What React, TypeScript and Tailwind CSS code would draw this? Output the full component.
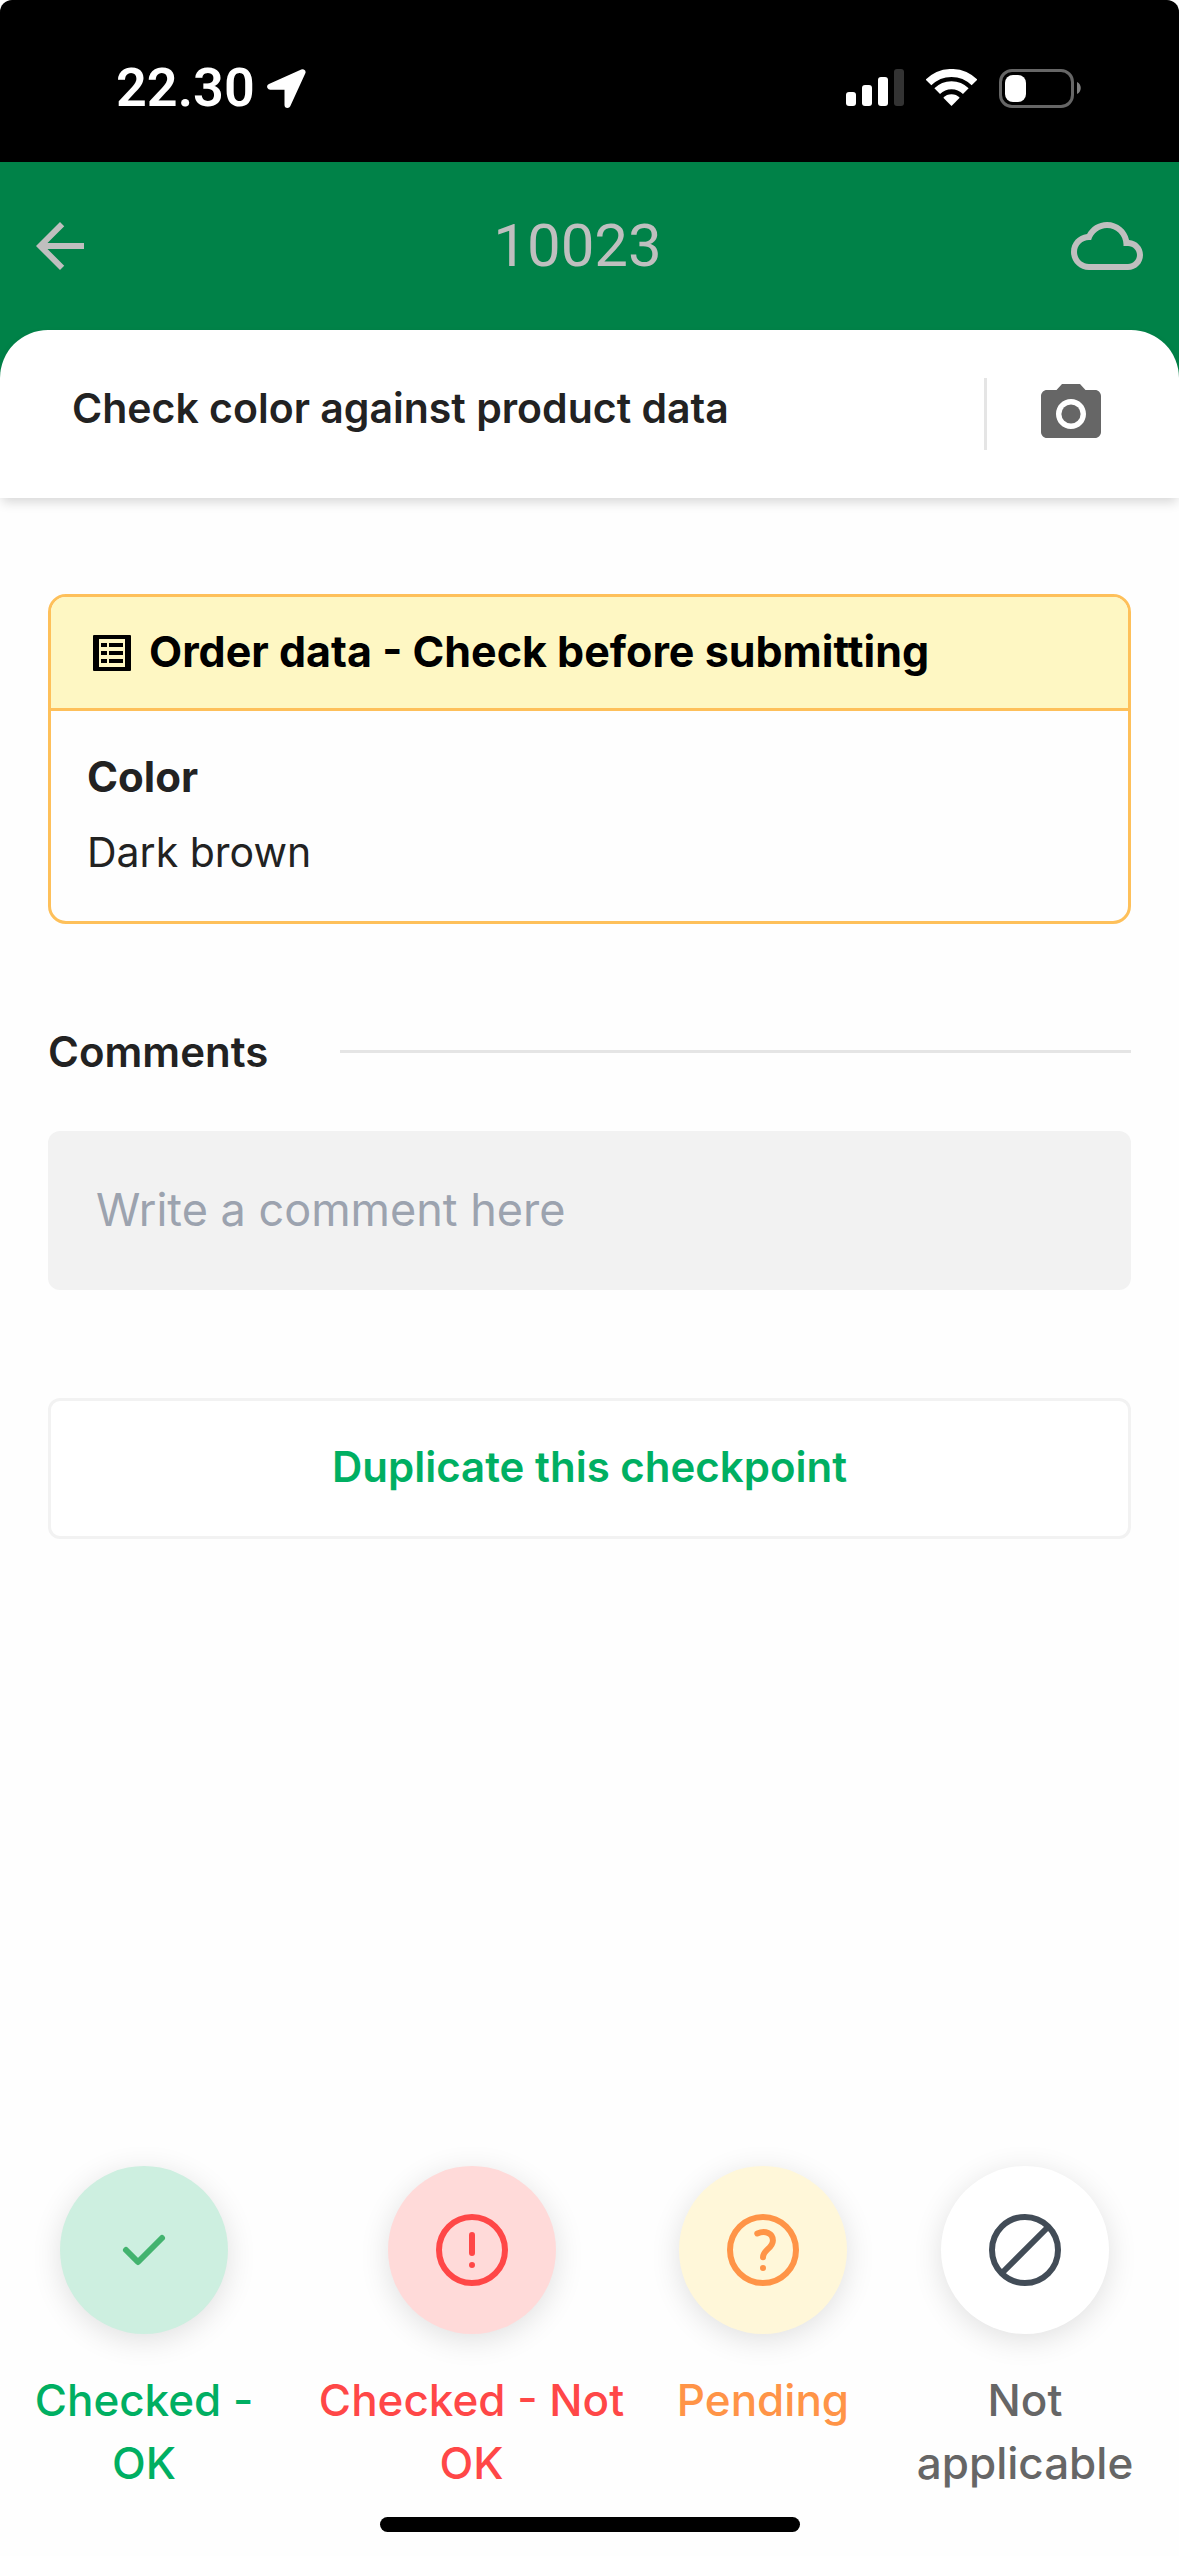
import React from "react";

const SignalIcon = () => (
  <svg width="58" height="38" viewBox="0 0 58 38" fill="#fff" aria-hidden="true">
    <rect x="0" y="23" width="10" height="14" rx="3" />
    <rect x="16" y="16" width="10" height="21" rx="3" />
    <rect x="32" y="8" width="10" height="29" rx="3" />
    <rect x="48" y="0" width="10" height="37" rx="3" fill="#333" />
  </svg>
);

const WifiIcon = () => (
  <svg width="51" height="38" viewBox="0 0 51 38" aria-hidden="true">
    <g fill="none" stroke="#fff" strokeWidth="8">
      <path d="M2.5 13.5a32.5 32.5 0 0 1 46 0" />
      <path d="M11.2 22.2a20.2 20.2 0 0 1 28.6 0" />
    </g>
    <path d="M17.3 28.8a11.4 11.4 0 0 1 16.4 0L25.5 37z" fill="#fff" />
  </svg>
);

const BatteryIcon = () => (
  <svg width="82" height="39" viewBox="0 0 82 39" aria-hidden="true">
    <rect x="1.5" y="1.5" width="72" height="36" rx="11.5" fill="none" stroke="#666" strokeWidth="3" />
    <rect x="6" y="6" width="21" height="27" rx="8" fill="#fff" />
    <path d="M78 13c5 2 5 10 0 12z" fill="#808080" />
  </svg>
);

const LocationIcon = () => (
  <svg width="39" height="39" viewBox="0 0 39 39" aria-hidden="true">
    <path d="M35.5 3.2 3.2 17.8h17.3V36z" fill="#fff" stroke="#fff" strokeWidth="6" strokeLinejoin="round" />
  </svg>
);

const ListIcon = () => (
  <svg width="38" height="40" viewBox="0 0 38 40" aria-hidden="true">
    <path d="M1 4h36a1 1 0 0 1 1 1v34a1 1 0 0 1-1 1H1a1 1 0 0 1-1-1V5a1 1 0 0 1 1-1zm5 4v28h26V8z" fillRule="evenodd" />
    <path d="M8 12h6v4H8zM16 12h14v4H16zM8 20h6v4H8zM16 20h14v4H16zM8 28h6v4H8zM16 28h14v4H16z" />
  </svg>
);

const StatusIcon: React.FC<{ children: React.ReactNode }> = ({ children }) => (
  <svg
    width="72"
    height="72"
    viewBox="0 0 24 24"
    fill="none"
    stroke="currentColor"
    strokeWidth="2"
    strokeLinecap="round"
    strokeLinejoin="round"
    aria-hidden="true"
  >
    {children}
  </svg>
);

const statuses = [
  {
    label: "Checked - OK",
    text: "text-[#00af62]",
    circle: "bg-[#cdefe0] text-[#43b36f]",
    icon: <path d="m6 12 4 4 8-8" />,
  },
  {
    label: "Checked - Not OK",
    text: "text-[#ff4747]",
    circle: "bg-[#ffdad9] text-[#ff4747]",
    icon: (
      <>
        <circle cx="12" cy="12" r="11" />
        <path d="M12 7v6M12 17v0" />
      </>
    ),
  },
  {
    label: "Pending",
    text: "text-[#ff9447]",
    circle: "bg-[#fff7d9] text-[#ff9447]",
    icon: (
      <>
        <circle cx="12" cy="12" r="11" />
        <path d="M10.1 6.5c2.7-1.2 5.2 0 5.2 2.3 0 2.6-3.3 3.2-3.3 5.6M12 18v0" />
      </>
    ),
  },
  {
    label: "Not applicable",
    text: "text-[#666]",
    circle: "bg-white text-[#424c57]",
    icon: (
      <>
        <circle cx="12" cy="12" r="11" />
        <path d="M4.5 19.5l15-15" />
      </>
    ),
  },
];

const App: React.FC = () => {
  return (
    <div className="flex min-h-screen flex-col bg-[#fefefe] font-['Inter',sans-serif] text-[#222]">
      {/* Device status bar */}
      <div className="flex items-center justify-between rounded-t-[12px] bg-black pt-[58px] pr-[98px] pb-11 pl-[116px]">
        <div className="flex items-center gap-3">
          <span className="font-['Roboto',sans-serif] text-[54px] leading-[60px] font-semibold text-white">22.30</span>
          <LocationIcon />
        </div>
        <div className="flex items-center gap-[22px]">
          <SignalIcon />
          <WifiIcon />
          <BatteryIcon />
        </div>
      </div>

      <header className="flex items-center justify-between bg-[#008248] px-9 py-12 text-[#bfbfbf]">
        <button type="button" aria-label="Back">
          <svg width="48" height="48" viewBox="4 4 16 16" fill="currentColor" aria-hidden="true">
            <path d="M20 11H7.83l5.59-5.59L12 4l-8 8 8 8 1.41-1.41L7.83 13H20z" />
          </svg>
        </button>
        <h1 className="font-['Roboto',sans-serif] text-[60px] leading-[72px]">10023</h1>
        <button type="button" aria-label="Sync">
          <svg width="72" height="72" viewBox="0 0 24 24" fill="currentColor" aria-hidden="true">
            <path d="M19.35 10.04C18.67 6.59 15.64 4 12 4 9.11 4 6.6 5.64 5.35 8.04 2.34 8.36 0 10.91 0 14c0 3.31 2.69 6 6 6h13c2.76 0 5-2.24 5-5 0-2.64-2.05-4.78-4.65-4.96zM19 18H6c-2.21 0-4-1.79-4-4s1.79-4 4-4h.71C7.37 7.69 9.48 6 12 6c3.04 0 5.5 2.46 5.5 5.5v.5H19c1.66 0 3 1.34 3 3s-1.34 3-3 3z" />
          </svg>
        </button>
      </header>

      {/* Checkpoint title */}
      <div className="bg-[#008248]">
        <div className="flex items-start justify-between rounded-t-[48px] bg-white px-[72px] py-12 shadow-[0_6px_12px_-2px_rgba(0,0,0,0.16)]">
          <h2 className="text-[41px] leading-[60px] font-semibold">Check color against product data</h2>
          <div className="border-l-3 border-[#e5e5e5] pl-12">
            <button type="button" aria-label="Take photo" className="block text-[#666]">
              <svg width="72" height="72" viewBox="0 0 24 24" fill="currentColor" aria-hidden="true">
                <circle cx="12" cy="12" r="3.2" />
                <path d="M9 2 7.17 4H4c-1.1 0-2 .9-2 2v12c0 1.1.9 2 2 2h16c1.1 0 2-.9 2-2V6c0-1.1-.9-2-2-2h-3.17L15 2H9zm3 15c-2.76 0-5-2.24-5-5s2.24-5 5-5 5 2.24 5 5-2.24 5-5 5z" />
              </svg>
            </button>
          </div>
        </div>
      </div>

      <main className="grow px-12 pt-24">
        {/* Order data */}
        <section className="overflow-hidden rounded-[18px] border-3 border-[#fec05a]">
          <div className="flex items-center gap-[18px] border-b-3 border-[#fec05a] bg-[#fef7c3] px-[42px] pt-6 pb-[27px] text-black">
            <ListIcon />
            <h3 className="text-[43px] leading-[60px] font-bold">Order data - Check before submitting</h3>
          </div>
          <dl className="px-9 pt-9 pb-[39px]">
            <dt className="text-[42px] leading-[60px] font-bold">Color</dt>
            <dd className="mt-[15px] text-[41px] leading-[60px]">Dark brown</dd>
          </dl>
        </section>

        {/* Comments */}
        <div className="mt-24 flex h-[63px] items-center gap-[72px]">
          <label htmlFor="comment" className="text-[42px] leading-[60px] font-semibold">
            Comments
          </label>
          <div className="h-[3px] grow bg-[#e5e5e5]" />
        </div>
        <input
          id="comment"
          type="text"
          placeholder="Write a comment here"
          className="mt-12 block h-[159px] w-full rounded-[12px] bg-[#f2f2f2] px-12 pt-12 pb-[51px] text-[45px] leading-[60px] outline-none placeholder:text-[#9ca3af]"
        />

        <button
          type="button"
          className="mt-27 block w-full rounded-[12px] border-3 border-[#f2f2f2] bg-white pt-9 pb-[39px] text-[42px] leading-[60px] font-semibold text-[#00af62]"
        >
          Duplicate this checkpoint
        </button>
      </main>

      {/* Status actions */}
      <footer className="pb-6">
        <div className="grid grid-cols-[288fr_367fr_216fr_308fr]">
          {statuses.map((s) => (
            <button key={s.label} type="button" className="flex flex-col items-center justify-start px-4">
              <span
                className={`flex size-[168px] items-center justify-center rounded-full shadow-[0_6px_30px_rgba(0,0,0,0.12)] ${s.circle}`}
              >
                <StatusIcon>{s.icon}</StatusIcon>
              </span>
              <span className={`mt-[35px] text-center text-[44px] leading-[63px] font-medium ${s.text}`}>{s.label}</span>
            </button>
          ))}
        </div>
        {/* Home indicator */}
        <div className="mx-auto mt-[22px] h-[15px] w-[420px] rounded-full bg-black" />
      </footer>
    </div>
  );
};

export default App;
